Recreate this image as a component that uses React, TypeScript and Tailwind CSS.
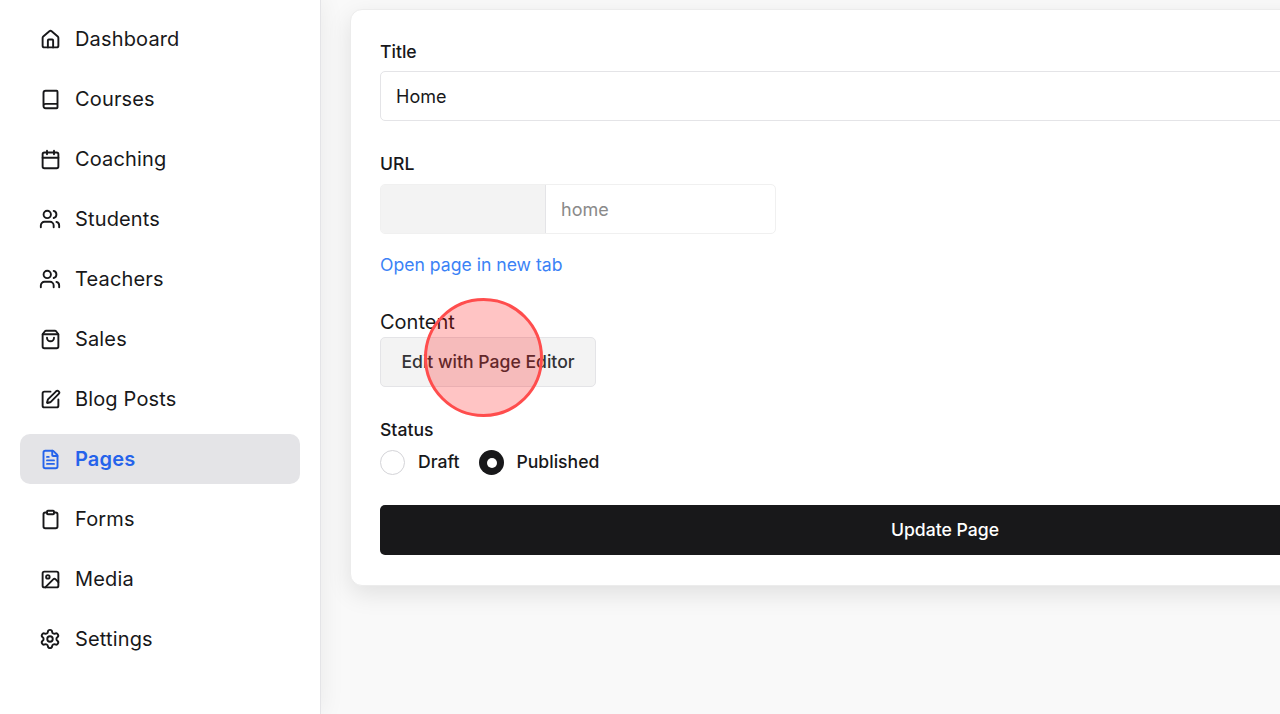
import React from 'react';
import {
  House,
  Book,
  Calendar,
  Users,
  ShoppingBag,
  SquarePen,
  FileText,
  Clipboard,
  Image,
  Settings,
} from 'lucide-react';

const NAV_ITEMS = [
  { label: 'Dashboard', icon: House, size: 21 },
  { label: 'Courses', icon: Book, size: 21 },
  { label: 'Coaching', icon: Calendar, size: 21 },
  { label: 'Students', icon: Users, size: 22 },
  { label: 'Teachers', icon: Users, size: 22 },
  { label: 'Sales', icon: ShoppingBag, size: 21 },
  { label: 'Blog Posts', icon: SquarePen, size: 21 },
  { label: 'Pages', icon: FileText, size: 21, active: true },
  { label: 'Forms', icon: Clipboard, size: 21 },
  { label: 'Media', icon: Image, size: 21 },
  { label: 'Settings', icon: Settings, size: 22 },
];

const App: React.FC = () => {
  return (
    <div className="flex h-screen overflow-hidden bg-[#f9f9f9] font-['Inter',sans-serif] text-[#18181a]">
      <aside className="relative z-10 w-[321px] shrink-0 border-r border-[#e4e4e7] bg-white px-5 pt-[14px] shadow-[0_0_24px_rgba(0,0,0,0.07)]">
        <nav className="flex flex-col gap-2.5">
          {NAV_ITEMS.map(item => {
            const Icon = item.icon;
            return (
              <a
                key={item.label}
                className={`flex h-[50px] items-center gap-[13px] rounded-[10px] px-[18px] text-[20px] tracking-[0.15px] ${
                  item.active ? 'bg-[#e4e4e7] font-semibold text-[#2563eb]' : ''
                }`}
              >
                <span className="flex h-6 w-6 items-center justify-center">
                  <Icon size={item.size} strokeWidth={1.9} absoluteStrokeWidth />
                </span>
                {item.label}
              </a>
            );
          })}
        </nav>
      </aside>

      <main className="relative flex-1 pl-[29px] pt-[9px]">
        <div className="w-[1190px] rounded-[12px] border border-[#ececec] bg-white px-[29px] pb-[30px] pt-[30px] shadow-[0_8px_24px_rgba(0,0,0,0.1)]">
          <label className="block text-[17.6px] font-[450] leading-[24px]">Title</label>
          <div className="mt-[7px] flex h-[50px] items-center rounded-[5px] border border-[#e4e4e7] px-[15px] text-[18px]">
            Home
          </div>

          <label className="mt-[31px] block text-[17.6px] font-[450] leading-[24px]">URL</label>
          <div className="mt-2 flex h-[50px] w-[396px] overflow-hidden rounded-[5px] border border-[#f0f0f0]">
            <div className="w-[165px] border-r border-[#e4e4e7] bg-[#f3f3f3]" />
            <div className="flex flex-1 items-center px-[15px] text-[18px] text-[#8a8a8a]">home</div>
          </div>
          <a className="mt-[19px] block text-[17.6px] leading-[24px] text-[#3b82f6]">Open page in new tab</a>

          <label className="mt-[32px] block text-[20px] leading-[26px]">Content</label>
          <button className="mt-[2px] block h-[50px] w-[216px] rounded-[5px] border border-[#e4e4e7] bg-[#f3f3f3] pt-px text-[17.6px] font-[450] text-[#333336]">
            Edit with Page Editor
          </button>

          <label className="mt-[31px] block text-[17.6px] font-[450] leading-[24px]">Status</label>
          <div className="mt-2 flex h-[25px] items-center text-[17.6px] font-[450]">
            <span className="h-[25px] w-[25px] rounded-full border border-[#d4d4d8] bg-white" />
            <span className="ml-[13px]">Draft</span>
            <span className="ml-5 flex h-[25px] w-[25px] items-center justify-center rounded-full bg-[#18181a]">
              <span className="h-2.5 w-2.5 rounded-full bg-white" />
            </span>
            <span className="ml-3">Published</span>
          </div>

          <button className="mt-[30px] block h-[50px] w-full rounded-[5px] bg-[#18181a] text-[17.6px] font-[450] text-white">
            Update Page
          </button>
        </div>

        <div className="absolute left-[103px] top-[298px] h-[119px] w-[119px] rounded-full border-[3px] border-[#ff4d4d] bg-[#ff0000]/[0.23]" />
      </main>
    </div>
  );
};

export default App;
